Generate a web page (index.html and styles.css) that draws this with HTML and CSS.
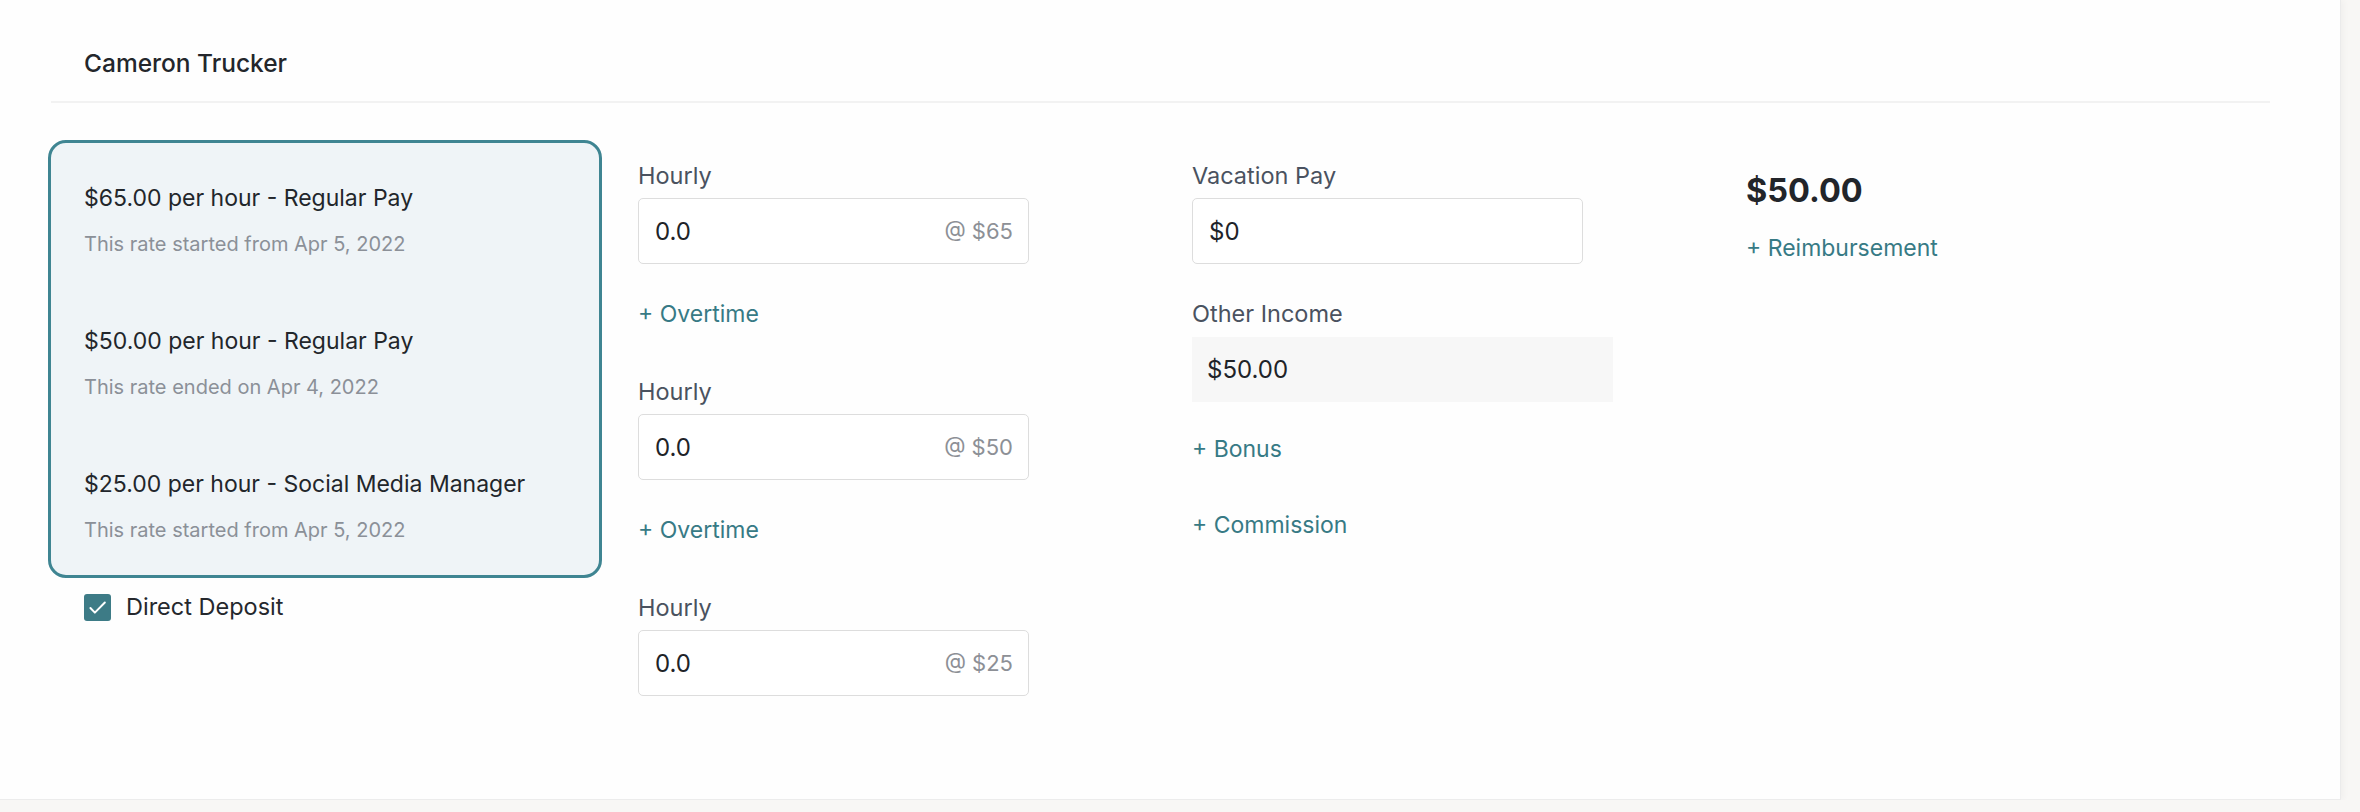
FILE: index.html
```html
<!DOCTYPE html>
<html lang="en">
<head>
    <meta charset="UTF-8">
    <meta name="viewport" content="width=device-width, initial-scale=1.0">
    <link rel="stylesheet" href="styles.css">
    <title>Payroll - Cameron Trucker</title>
</head>
<body>
    <div class="page">
        <div class="employee-header">
            <h2>Cameron Trucker</h2>
        </div>

        <div class="pay-grid">
            <div class="rates-col">
                <div class="rate-card">
                    <div class="rate">
                        <div class="rate-title">$65.00 per hour - Regular Pay</div>
                        <div class="rate-note">This rate started from Apr 5, 2022</div>
                    </div>
                    <div class="rate">
                        <div class="rate-title">$50.00 per hour - Regular Pay</div>
                        <div class="rate-note">This rate ended on Apr 4, 2022</div>
                    </div>
                    <div class="rate">
                        <div class="rate-title">$25.00 per hour - Social Media Manager</div>
                        <div class="rate-note">This rate started from Apr 5, 2022</div>
                    </div>
                </div>
                <label class="checkbox-row">
                    <span class="checkbox">
                        <svg viewBox="0 0 16 16" width="21" height="21"><path d="M2.6 8.4l3.4 3.5L13.6 4.2" fill="none" stroke="#fff" stroke-width="1.5" stroke-linecap="round" stroke-linejoin="round"/></svg>
                    </span>
                    Direct Deposit
                </label>
            </div>

            <div class="hours-col">
                <div class="field-group">
                    <label class="field-label">Hourly</label>
                    <div class="field">
                        <input type="text" value="0.0">
                        <span class="suffix">@ $65</span>
                    </div>
                </div>
                <a class="add-link overtime" href="#">+ Overtime</a>
                <div class="field-group">
                    <label class="field-label">Hourly</label>
                    <div class="field">
                        <input type="text" value="0.0">
                        <span class="suffix">@ $50</span>
                    </div>
                </div>
                <a class="add-link overtime" href="#">+ Overtime</a>
                <div class="field-group">
                    <label class="field-label">Hourly</label>
                    <div class="field">
                        <input type="text" value="0.0">
                        <span class="suffix">@ $25</span>
                    </div>
                </div>
            </div>

            <div class="income-col">
                <div class="field-group">
                    <label class="field-label">Vacation Pay</label>
                    <div class="field">
                        <input type="text" value="$0">
                    </div>
                </div>
                <div class="field-group other-income">
                    <label class="field-label">Other Income</label>
                    <div class="readonly-box">$50.00</div>
                </div>
                <a class="add-link bonus" href="#">+ Bonus</a>
                <a class="add-link commission" href="#">+ Commission</a>
            </div>

            <div class="total-col">
                <div class="total">$50.00</div>
                <a class="add-link" href="#">+ Reimbursement</a>
            </div>
        </div>
    </div>
</body>
</html>
```

FILE: styles.css
```css
body {
    margin: 0;
    padding: 0;
    background-color: #f8f7f5;
    font-family: Inter, 'Noto Sans', sans-serif;
    color: #22262b;
}

.page {
    width: 2340px;
    height: 799px;
    background-color: #fefefe;
    border-right: 1px solid #ebebeb;
    border-bottom: 1px solid #ececec;
    box-shadow: 3px 0 6px rgba(0, 0, 0, 0.03);
    overflow: hidden;
}

.employee-header {
    margin: 0 70px 0 51px;
    padding: 48px 0 0 33px;
    height: 53px;
    border-bottom: 2px solid #f2f2f2;
}

.employee-header h2 {
    margin: 0;
    font-size: 24.5px;
    font-weight: 500;
    line-height: 30px;
    color: #23262b;
}

.pay-grid {
    display: grid;
    grid-template-columns: 554px 518px 518px auto;
    column-gap: 36px;
    padding: 37px 0 0 48px;
}

/* rate card */
.rate-card {
    background-color: #eff4f7;
    border: 3px solid #3f8592;
    border-radius: 18px;
    padding: 40px 33px 32px;
    display: flex;
    flex-direction: column;
    gap: 69px;
}

.rate {
    display: flex;
    flex-direction: column;
    gap: 18px;
}

.rate-title {
    font-size: 23px;
    line-height: 30px;
    color: #22262b;
}

.rate-note {
    font-size: 20px;
    line-height: 26px;
    color: #8b9098;
}

.checkbox-row {
    display: flex;
    align-items: center;
    gap: 15px;
    margin: 15px 0 0 36px;
    font-size: 23.5px;
    line-height: 28px;
    color: #25282d;
}

.checkbox {
    width: 27px;
    height: 27px;
    border-radius: 3px;
    background-color: #3d7b86;
    display: flex;
    align-items: center;
    justify-content: center;
}

/* fields */
.hours-col,
.income-col,
.total-col {
    display: flex;
    flex-direction: column;
    align-items: flex-start;
}

.hours-col,
.income-col {
    padding-top: 22px;
}

.field-group {
    display: flex;
    flex-direction: column;
    gap: 8px;
}

.field-label {
    font-size: 23.5px;
    line-height: 28px;
    color: #4a5260;
}

.field {
    width: 391px;
    height: 66px;
    box-sizing: border-box;
    border: 1px solid #dddddd;
    border-radius: 5px;
    background-color: #fff;
    display: flex;
    align-items: center;
    padding: 0 15px 0 16px;
}

.field input {
    flex: 1;
    min-width: 0;
    border: none;
    outline: none;
    padding: 0;
    background: transparent;
    font-family: Inter, 'Noto Sans', sans-serif;
    font-size: 24px;
    color: #202328;
}

.suffix {
    font-size: 22px;
    color: #8d9096;
}

.add-link {
    font-size: 23px;
    line-height: 28px;
    color: #377a85;
    text-decoration: none;
}

.overtime {
    margin: 36px 0 50px;
}

.other-income {
    margin-top: 36px;
}

.readonly-box {
    width: 421px;
    height: 65px;
    box-sizing: border-box;
    margin-top: 1px;
    padding: 0 15px;
    background-color: #f7f7f7;
    display: flex;
    align-items: center;
    font-size: 24px;
    color: #202328;
}

.bonus {
    margin-top: 33px;
}

.commission {
    margin-top: 48px;
}

.total {
    margin-top: 33px;
    font-size: 32.5px;
    font-weight: 700;
    line-height: 36px;
    color: #22252a;
}

.total + .add-link {
    margin-top: 25px;
}
```
